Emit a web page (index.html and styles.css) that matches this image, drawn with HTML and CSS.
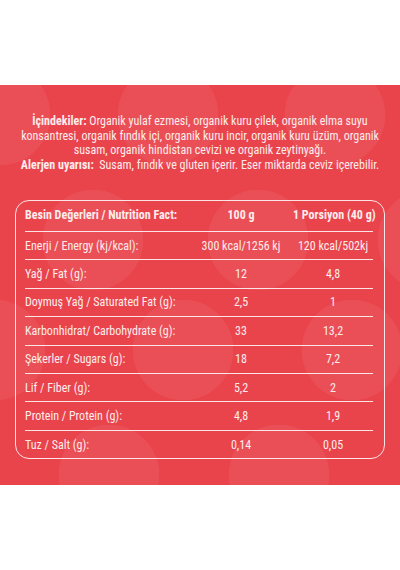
FILE: index.html
```html
<!DOCTYPE html>
<html lang="tr">
<head>
<meta charset="utf-8">
<link rel="stylesheet" href="styles.css">
</head>
<body>
<div class="panel">
  <p class="ingredients"><b>İçindekiler:</b> Organik yulaf ezmesi, organik kuru çilek, organik elma suyu<br>konsantresi, organik fındık içi, organik kuru incir, organik kuru üzüm, organik<br>susam, organik hindistan cevizi ve organik zeytinyağı.<br><b>Alerjen uyarısı:</b>&nbsp; Susam, fındık ve gluten içerir. Eser miktarda ceviz içerebilir.</p>
  <div class="facts">
    <div class="row head"><span class="c1">Besin Değerleri / Nutrition Fact:</span><span class="c2">100 g</span><span class="c3">1 Porsiyon (40 g)</span></div>
    <div class="row"><span class="c1">Enerji / Energy (kj/kcal):</span><span class="c2">300 kcal/1256 kj</span><span class="c3">120 kcal/502kj</span></div>
    <div class="row"><span class="c1">Yağ / Fat (g):</span><span class="c2">12</span><span class="c3">4,8</span></div>
    <div class="row"><span class="c1">Doymuş Yağ / Saturated Fat (g):</span><span class="c2">2,5</span><span class="c3">1</span></div>
    <div class="row"><span class="c1">Karbonhidrat/ Carbohydrate (g):</span><span class="c2">33</span><span class="c3">13,2</span></div>
    <div class="row"><span class="c1">Şekerler / Sugars (g):</span><span class="c2">18</span><span class="c3">7,2</span></div>
    <div class="row"><span class="c1">Lif / Fiber (g):</span><span class="c2">5,2</span><span class="c3">2</span></div>
    <div class="row"><span class="c1">Protein / Protein (g):</span><span class="c2">4,8</span><span class="c3">1,9</span></div>
    <div class="row"><span class="c1">Tuz / Salt (g):</span><span class="c2">0,14</span><span class="c3">0,05</span></div>
  </div>
</div>
</body>
</html>
```
FILE: styles.css
```css
html, body {
  margin: 0;
  padding: 0;
  background: #ffffff;
}
body {
  width: 400px;
  height: 570px;
  font-family: "Roboto Condensed", Roboto, "Noto Sans", sans-serif;
  font-stretch: condensed;
  color: #fdecec;
}
.panel {
  margin-top: 85px;
  height: 400px;
  box-sizing: border-box;
  padding-top: 29px;
  background-color: #e9444c;
  background-image:
    radial-gradient(circle at 0px 30px, rgba(255,255,255,.06) 50px, transparent 50.5px),
    radial-gradient(circle at 168px 30px, rgba(255,255,255,.06) 50px, transparent 50.5px),
    radial-gradient(circle at 335px 30px, rgba(255,255,255,.06) 50px, transparent 50.5px),
    radial-gradient(circle at 93px 155px, rgba(255,255,255,.06) 50px, transparent 50.5px),
    radial-gradient(circle at 258px 155px, rgba(255,255,255,.06) 50px, transparent 50.5px),
    radial-gradient(circle at 428px 155px, rgba(255,255,255,.06) 50px, transparent 50.5px),
    radial-gradient(circle at -5px 265px, rgba(255,255,255,.06) 50px, transparent 50.5px),
    radial-gradient(circle at 183px 265px, rgba(255,255,255,.06) 50px, transparent 50.5px),
    radial-gradient(circle at 352px 265px, rgba(255,255,255,.06) 50px, transparent 50.5px),
    radial-gradient(circle at 109px 390px, rgba(255,255,255,.06) 50px, transparent 50.5px),
    radial-gradient(circle at 279px 390px, rgba(255,255,255,.06) 50px, transparent 50.5px);
}
.ingredients {
  margin: 0;
  font-size: 12px;
  line-height: 14.6px;
  text-align: center;
  white-space: nowrap;
}
.ingredients b {
  font-weight: 700;
}
.facts {
  margin: 28px 15px 0;
  border: 1.5px solid rgba(255,255,255,.85);
  border-radius: 14px;
  padding: 0 11px 0 9px;
  font-size: 12px;
}
.row {
  display: grid;
  grid-template-columns: 164px 104px 80px;
  align-items: center;
  height: 28.43px;
  box-sizing: border-box;
  border-top: 1.5px solid rgba(255,255,255,.85);
}
.row.head {
  border-top: none;
  height: 29.5px;
  padding-bottom: 3px;
  font-weight: 700;
}
.c1 {
  white-space: nowrap;
}
.c2, .c3 {
  text-align: center;
  white-space: nowrap;
}
```
